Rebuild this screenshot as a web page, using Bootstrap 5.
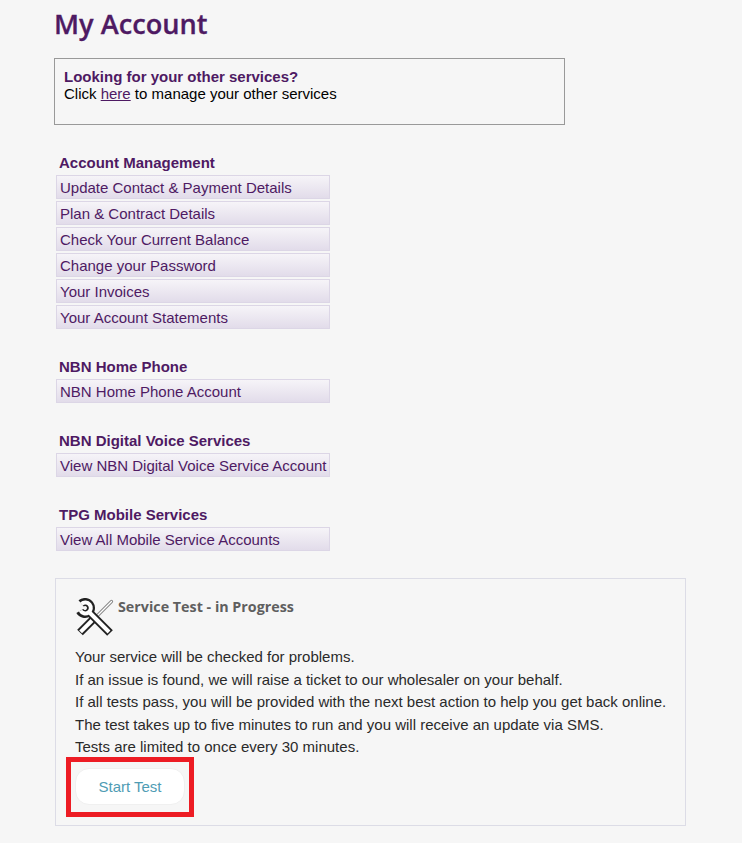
<!DOCTYPE html>
<html lang="en">
<head>
<meta charset="utf-8">
<title>My Account</title>
<link href="https://cdn.jsdelivr.net/npm/bootstrap@5.3.0/dist/css/bootstrap.min.css" rel="stylesheet">
<style>
html, body { height: 843px; overflow: hidden; }
body { background: #f6f6f6; font-family: "Liberation Sans", Arial, sans-serif; font-size: 15px; line-height: 17px; color: #000; }
.page-wrap { padding: 0 0 0 54px; width: 686px; }
.page-title { font-family: "Open Sans", sans-serif; font-weight: 600; font-size: 27.2px; line-height: 36px; color: #4e1a63; margin: 6px 0 16px; -webkit-text-stroke: 0.3px #4e1a63; }
.notice { width: 511px; height: 67px; border: 1px solid #999; padding: 9px 9px; }
.notice strong { color: #4e1a63; display: block; }
.notice a { color: #4e1a63; }
.menu-group { margin: 0 0 0 2px; width: 274px; }
.menu-head { font-size: 15px; font-weight: 700; color: #4e1a63; line-height: 17px; padding: 0 0 4px 3px; margin: 0; }
.menu-item { display: block; height: 24px; margin-bottom: 2px; padding: 0 0 0 3px; line-height: 24px; color: #4e1a63; text-decoration: none; border: 1px solid #dcd6e6; background: linear-gradient(#f6f4f8, #e2dcea); white-space: nowrap; }
.first-group { margin-top: 29px; }
.later-group { margin-top: 29px; }
.test-panel { margin: 27px 0 0 1px; width: 631px; height: 248px; border: 1px solid #dcdce6; padding: 16px 0 16px 19px; color: #2a2a2a; line-height: 22.5px; }
.test-title { font-family: "Open Sans", sans-serif; font-weight: 700; font-size: 14.3px; line-height: 24px; color: #5f5f5f; margin: 0; }
.test-head { height: 51px; gap: 4px; }
.test-icon { width: 39px; height: 39px; margin-top: 3px; flex: none; }
.tool-line { fill: none; stroke: #222; stroke-width: 8; }
.tool-fill { fill: none; stroke: #fff; stroke-width: 4; }
.red-frame { width: 128px; height: 60px; margin: 0 0 0 -9px; border: 5px solid #ed1c24; padding: 6px 4px; }
.start-btn { width: 110px; height: 37px; padding: 0; border: 1px solid #f0f0f0; border-radius: 14px; background: #fff; color: #4f9cb4; font-size: 15px; line-height: 35px; display: block; }
.test-lines { margin: 0 0 -2px; white-space: nowrap; }
</style>
</head>
<body>
<main class="page-wrap">
  <h1 class="page-title">My Account</h1>
  <div class="notice"><strong>Looking for your other services?</strong>Click <a href="#">here</a> to manage your other services</div>

  <section class="menu-group first-group">
    <h2 class="menu-head">Account Management</h2>
    <a class="menu-item" href="#">Update Contact &amp; Payment Details</a>
    <a class="menu-item" href="#">Plan &amp; Contract Details</a>
    <a class="menu-item" href="#">Check Your Current Balance</a>
    <a class="menu-item" href="#">Change your Password</a>
    <a class="menu-item" href="#">Your Invoices</a>
    <a class="menu-item" href="#">Your Account Statements</a>
  </section>
  <section class="menu-group later-group">
    <h2 class="menu-head">NBN Home Phone</h2>
    <a class="menu-item" href="#">NBN Home Phone Account</a>
  </section>
  <section class="menu-group later-group">
    <h2 class="menu-head">NBN Digital Voice Services</h2>
    <a class="menu-item" href="#">View NBN Digital Voice Service Account</a>
  </section>
  <section class="menu-group later-group">
    <h2 class="menu-head">TPG Mobile Services</h2>
    <a class="menu-item" href="#">View All Mobile Service Accounts</a>
  </section>

  <section class="test-panel">
    <div class="d-flex test-head">
      <svg class="test-icon" viewBox="0 0 39 39" aria-hidden="true">
        <path d="M36.5 3.5 L21 19" fill="none" stroke="#888" stroke-width="3.2" stroke-linecap="round"/>
        <path d="M36.5 3.5 L21 19" fill="none" stroke="#fff" stroke-width="1.2" stroke-linecap="round"/>
        <path class="tool-line" d="M18 21.5 L5 34.5" stroke-linecap="butt"/>
        <path class="tool-fill" d="M18 21.5 L5.6 33.9" stroke-linecap="butt"/>
        <path class="tool-line" d="M6.1 5.4 A6 6 0 1 1 4.8 13 M14.5 14.5 L35 35" stroke-linecap="butt"/>
        <path class="tool-fill" d="M6.5 6 A5.5 5.5 0 1 1 5.5 12.6 M14 14 L34 34" stroke-linecap="butt"/>
      </svg>
      <h2 class="test-title">Service Test - in Progress</h2>
    </div>
    <p class="test-lines">Your service will be checked for problems.<br>If an issue is found, we will raise a ticket to our wholesaler on your behalf.<br>If all tests pass, you will be provided with the next best action to help you get back online.<br>The test takes up to five minutes to run and you will receive an update via SMS.<br>Tests are limited to once every 30 minutes.</p>
    <div class="red-frame"><button type="button" class="start-btn">Start Test</button></div>
  </section>
</main>
<script src="https://cdn.jsdelivr.net/npm/bootstrap@5.3.0/dist/js/bootstrap.bundle.min.js"></script>
</body>
</html>
